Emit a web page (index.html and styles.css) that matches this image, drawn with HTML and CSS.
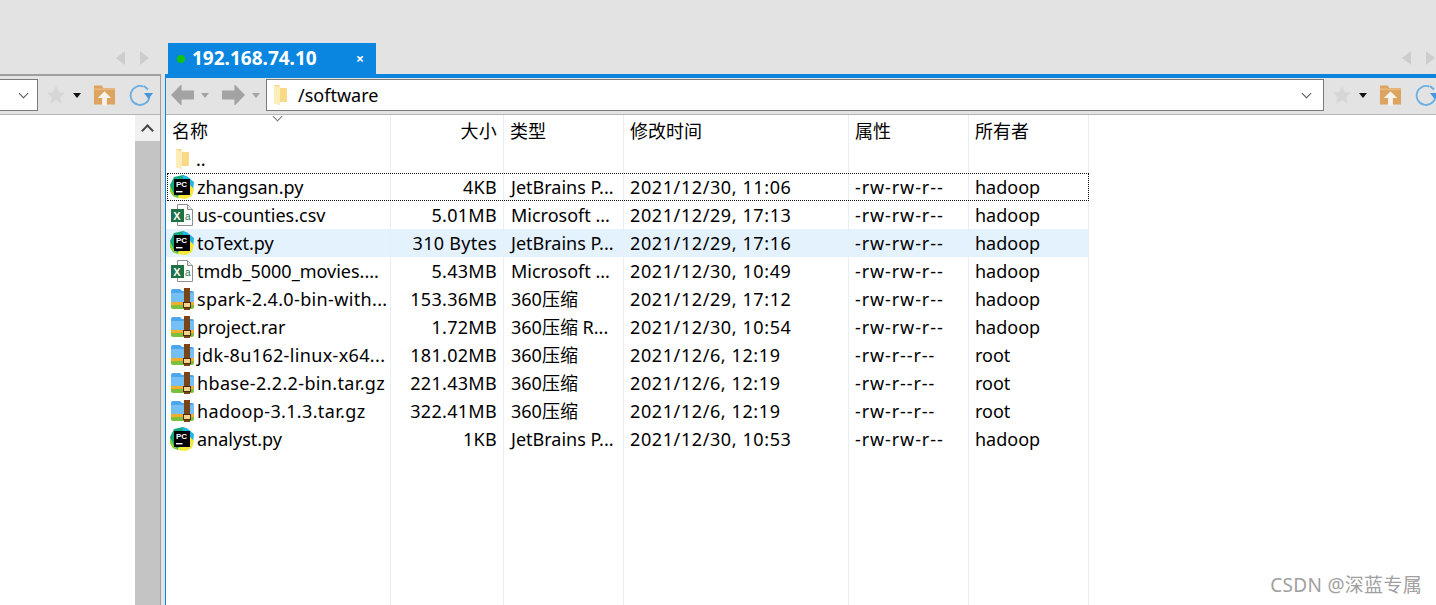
FILE: index.html
```html
<!DOCTYPE html>
<html lang="en">
<head>
    <meta charset="UTF-8">
    <meta name="viewport" content="width=device-width, initial-scale=1.0">
    <title>192.168.74.10</title>
    <link rel="stylesheet" href="styles.css">
</head>
<body>
    <svg class="icon-defs" width="0" height="0">
        <defs>
            <symbol id="i-folder" viewBox="0 0 16 22">
                <path d="M2 1h5l1 3h6q1 0 1 1v12q0 1-1 1H8v3l-6-2z" fill="#f5d47a"/>
                <path d="M8 4h6q1 0 1 1v12q0 1-1 1H8z" fill="#f7d986"/>
                <path d="M2 1l6 2.500V21l-6-2z" fill="#fdedb8"/>
            </symbol>
            <symbol id="i-pc" viewBox="0 0 24 24">
                <path d="M0 10l4-8 9-2 5 2-2 10-8 11-5-2-3-5z" fill="#14a97c"/>
                <path d="M12 0l6 2 6 5-1 9-8-5z" fill="#23b5e8"/>
                <path d="M20 10l4 4-2 7-6 3-9-1 7-11z" fill="#f4e83a"/>
                <path d="M0 10l4 9 5 4-6-2-3-5z" fill="#8fd52c"/>
                <rect x="4" y="4" width="16" height="16" fill="#000"/>
                <text x="6" y="12" class="pc-label">PC</text>
                <rect x="6" y="16" width="6.500" height="1.400" fill="#fff"/>
            </symbol>
            <symbol id="i-xls" viewBox="0 0 24 24">
                <path d="M7.500 1.500h10l5 5v16h-15z" fill="#fff" stroke="#8f8f8f"/>
                <path d="M17.500 1.500v5h5" fill="#e8e8e8" stroke="#8f8f8f"/>
                <rect x="1" y="6" width="13" height="13" fill="#1e7145"/>
                <text x="3.200" y="16.500" class="xls-label">X</text>
                <text x="15" y="17" class="xls-small">a</text>
            </symbol>
            <symbol id="i-rar" viewBox="0 0 24 24">
                <path d="M1 4q0-2 2-2h7l2 2h10q2 0 2 2v9H1z" fill="#4aa6ee"/>
                <path d="M1 6h23v9H1z" fill="#74c0f6"/>
                <path d="M1 15h23v3H1z" fill="#f4ad2d"/>
                <path d="M1 18h23v2q0 2-2 2H3q-2 0-2-2z" fill="#7cbf3a"/>
                <rect x="14" y="1" width="6" height="22" fill="#7a4419"/>
                <rect x="13.500" y="15.500" width="7" height="5" fill="#f3d58f" stroke="#4d2a0e"/>
            </symbol>
            <symbol id="i-star" viewBox="0 0 20 20">
                <path d="M10 1l2.800 6 6.200.7-4.600 4.300 1.300 6.500-5.700-3.200-5.700 3.200 1.300-6.500L1 7.700 7.200 7z" fill="#d6d6d6" stroke="#dedede"/>
            </symbol>
            <symbol id="i-home" viewBox="0 0 24 22">
                <path d="M1 1h8l2 3h12v17H1z" fill="#dca361"/>
                <path d="M1 4h22v2H1z" fill="#e6b67c"/>
                <path d="M12 7l7 7h-4.500v8h-5v-8H5z" fill="#f6f2ec"/>
            </symbol>
            <symbol id="i-refresh" viewBox="0 0 24 24">
                <path d="M14.500 3.600A9.500 9.500 0 1 0 20.500 14" fill="none" stroke="#6aaee6" stroke-width="1.800"/>
                <path d="M15 3l4 3.500" fill="none" stroke="#6aaee6" stroke-width="1.800"/>
                <path d="M15 10h9l-4.500 6z" fill="#4797de"/>
            </symbol>
        </defs>
    </svg>

    <div class="window">
        <header class="tabbar">
            <div class="tab-side">
                <span class="tri tri-left"></span>
                <span class="tri tri-right"></span>
            </div>
            <div class="tab">
                <span class="tab-dot"></span>
                <span class="tab-title">192.168.74.10</span>
                <span class="tab-close">×</span>
            </div>
            <div class="tab-side tab-side-wide">
                <span class="tri tri-left"></span>
                <span class="tri tri-right"></span>
            </div>
        </header>

        <main class="panes">
            <section class="pane-left">
                <div class="toolbar toolbar-left">
                    <div class="address address-left"><span class="chevron"></span></div>
                    <div class="tool-group">
                        <svg class="ico-star"><use href="#i-star"/></svg>
                        <span class="caret caret-dark"></span>
                        <svg class="ico-home"><use href="#i-home"/></svg>
                        <svg class="ico-refresh"><use href="#i-refresh"/></svg>
                    </div>
                </div>
                <div class="left-body">
                    <div class="left-list"></div>
                    <div class="scrollbar">
                        <div class="scroll-up"><span class="scroll-arrow"></span></div>
                    </div>
                </div>
            </section>

            <section class="pane-right">
                <div class="toolbar toolbar-right">
                    <div class="nav-group">
                        <span class="nav-arrow nav-back"></span>
                        <span class="caret"></span>
                        <span class="nav-arrow nav-forward"></span>
                        <span class="caret"></span>
                    </div>
                    <div class="address address-right">
                        <svg class="ico-path-folder"><use href="#i-folder"/></svg>
                        <span class="path">/software</span>
                        <span class="chevron"></span>
                    </div>
                    <div class="tool-group">
                        <svg class="ico-star"><use href="#i-star"/></svg>
                        <span class="caret caret-dark"></span>
                        <svg class="ico-home"><use href="#i-home"/></svg>
                        <svg class="ico-refresh"><use href="#i-refresh"/></svg>
                    </div>
                </div>

                <div class="file-list">
                    <span class="sort-mark"></span>
                    <div class="row row-head">
                        <div class="cell">名称</div>
                        <div class="cell cell-num">大小</div>
                        <div class="cell">类型</div>
                        <div class="cell">修改时间</div>
                        <div class="cell">属性</div>
                        <div class="cell">所有者</div>
                    </div>
                    <div class="row">
                        <div class="cell cell-name"><svg class="file-ico file-ico-folder"><use href="#i-folder"/></svg><span class="file-name">..</span></div>
                        <div class="cell"></div><div class="cell"></div><div class="cell"></div><div class="cell"></div><div class="cell"></div>
                    </div>
                    <div class="row row-focus">
                        <div class="cell cell-name"><svg class="file-ico"><use href="#i-pc"/></svg><span class="file-name">zhangsan.py</span></div>
                        <div class="cell cell-num">4KB</div>
                        <div class="cell cell-type">JetBrains P...</div>
                        <div class="cell cell-date">2021/12/30, 11:06</div>
                        <div class="cell cell-perm">-rw-rw-r--</div>
                        <div class="cell">hadoop</div>
                    </div>
                    <div class="row">
                        <div class="cell cell-name"><svg class="file-ico"><use href="#i-xls"/></svg><span class="file-name">us-counties.csv</span></div>
                        <div class="cell cell-num">5.01MB</div>
                        <div class="cell cell-type">Microsoft ...</div>
                        <div class="cell cell-date">2021/12/29, 17:13</div>
                        <div class="cell cell-perm">-rw-rw-r--</div>
                        <div class="cell">hadoop</div>
                    </div>
                    <div class="row row-hover">
                        <div class="cell cell-name"><svg class="file-ico"><use href="#i-pc"/></svg><span class="file-name">toText.py</span></div>
                        <div class="cell cell-num">310 Bytes</div>
                        <div class="cell cell-type">JetBrains P...</div>
                        <div class="cell cell-date">2021/12/29, 17:16</div>
                        <div class="cell cell-perm">-rw-rw-r--</div>
                        <div class="cell">hadoop</div>
                    </div>
                    <div class="row">
                        <div class="cell cell-name"><svg class="file-ico"><use href="#i-xls"/></svg><span class="file-name">tmdb_5000_movies....</span></div>
                        <div class="cell cell-num">5.43MB</div>
                        <div class="cell cell-type">Microsoft ...</div>
                        <div class="cell cell-date">2021/12/30, 10:49</div>
                        <div class="cell cell-perm">-rw-rw-r--</div>
                        <div class="cell">hadoop</div>
                    </div>
                    <div class="row">
                        <div class="cell cell-name"><svg class="file-ico"><use href="#i-rar"/></svg><span class="file-name file-name-wide">spark-2.4.0-bin-with...</span></div>
                        <div class="cell cell-num">153.36MB</div>
                        <div class="cell cell-type">360压缩</div>
                        <div class="cell cell-date">2021/12/29, 17:12</div>
                        <div class="cell cell-perm">-rw-rw-r--</div>
                        <div class="cell">hadoop</div>
                    </div>
                    <div class="row">
                        <div class="cell cell-name"><svg class="file-ico"><use href="#i-rar"/></svg><span class="file-name">project.rar</span></div>
                        <div class="cell cell-num">1.72MB</div>
                        <div class="cell cell-type">360压缩 R...</div>
                        <div class="cell cell-date">2021/12/30, 10:54</div>
                        <div class="cell cell-perm">-rw-rw-r--</div>
                        <div class="cell">hadoop</div>
                    </div>
                    <div class="row">
                        <div class="cell cell-name"><svg class="file-ico"><use href="#i-rar"/></svg><span class="file-name file-name-wide">jdk-8u162-linux-x64...</span></div>
                        <div class="cell cell-num">181.02MB</div>
                        <div class="cell cell-type">360压缩</div>
                        <div class="cell cell-date">2021/12/6, 12:19</div>
                        <div class="cell cell-perm">-rw-r--r--</div>
                        <div class="cell">root</div>
                    </div>
                    <div class="row">
                        <div class="cell cell-name"><svg class="file-ico"><use href="#i-rar"/></svg><span class="file-name file-name-wide">hbase-2.2.2-bin.tar.gz</span></div>
                        <div class="cell cell-num">221.43MB</div>
                        <div class="cell cell-type">360压缩</div>
                        <div class="cell cell-date">2021/12/6, 12:19</div>
                        <div class="cell cell-perm">-rw-r--r--</div>
                        <div class="cell">root</div>
                    </div>
                    <div class="row">
                        <div class="cell cell-name"><svg class="file-ico"><use href="#i-rar"/></svg><span class="file-name file-name-wide">hadoop-3.1.3.tar.gz</span></div>
                        <div class="cell cell-num">322.41MB</div>
                        <div class="cell cell-type">360压缩</div>
                        <div class="cell cell-date">2021/12/6, 12:19</div>
                        <div class="cell cell-perm">-rw-r--r--</div>
                        <div class="cell">root</div>
                    </div>
                    <div class="row">
                        <div class="cell cell-name"><svg class="file-ico"><use href="#i-pc"/></svg><span class="file-name">analyst.py</span></div>
                        <div class="cell cell-num">1KB</div>
                        <div class="cell cell-type">JetBrains P...</div>
                        <div class="cell cell-date">2021/12/30, 10:53</div>
                        <div class="cell cell-perm">-rw-rw-r--</div>
                        <div class="cell">hadoop</div>
                    </div>
                    <div class="row row-fill">
                        <div class="cell"></div><div class="cell"></div><div class="cell"></div><div class="cell"></div><div class="cell"></div><div class="cell"></div>
                    </div>
                </div>
            </section>
        </main>
    </div>

    <div class="watermark">CSDN @深蓝专属</div>
</body>
</html>
```

FILE: styles.css
```css
* { box-sizing: border-box; }
html, body { height: 100%; }
body { margin: 0; overflow: hidden; background-color: #fff; color: #000; font-family: "Noto Sans", "Noto Sans CJK SC", sans-serif; font-size: 18px; }
.icon-defs { display: block; height: 0; }
.window { display: flex; flex-direction: column; width: 1460px; height: 605px; }

/* tab strip */
.tabbar { display: flex; flex: none; height: 74px; padding-top: 43px; background-color: #e3e3e3; }
.tab-side { display: flex; width: 168px; flex: none; justify-content: flex-end; align-items: flex-start; gap: 15px; padding: 8px 19px 0 0; }
.tab-side-wide { width: 1068px; padding-right: 9px; }
.tri { width: 0; height: 0; border-top: 7px solid transparent; border-bottom: 7px solid transparent; }
.tri-left { border-right: 9px solid #cdcdcd; }
.tri-right { border-left: 9px solid #cdcdcd; }
.tab { display: flex; align-items: center; width: 208px; background-color: #0a86e0; color: #fff; padding: 0 12px 0 9px; }
.tab-dot { width: 8px; height: 8px; border-radius: 50%; background-color: #0fc30f; margin-right: 7px; }
.tab-title { flex: 1; font-size: 19px; font-weight: 700; line-height: 31px; }
.tab-close { font-size: 14px; font-weight: 700; line-height: 14px; }

/* panes */
.panes { display: flex; flex: 1; min-height: 0; background-color: #e3e3e3; }
.pane-left { display: flex; flex-direction: column; flex: none; width: 161px; background-color: #fff; border-top: 2px solid #9e9e9e; border-right: 1px solid #9e9e9e; }
.pane-right { display: flex; flex-direction: column; flex: none; width: 1295px; margin-left: 4px; border-top: 4px solid #0a86e0; border-left: 1px solid #0a86e0; background-color: #fff; }

.toolbar { display: flex; flex: none; align-items: flex-start; height: 37px; background-color: #e3e3e3; border-bottom: 1px solid #b5b5b5; }
.toolbar-left { height: 39px; padding-top: 2px; }
.address { display: flex; align-items: center; height: 32px; margin-top: 1px; background-color: #fff; border: 1px solid #7a7a7a; }
.address-left { width: 38px; justify-content: flex-end; padding-right: 10px; border-left: none; }
.address-right { width: 1058px; padding: 0 13px 0 5px; }
.chevron { width: 7px; height: 7px; margin-top: -4px; border-right: 1px solid #555; border-bottom: 1px solid #555; transform: rotate(45deg); }
.ico-path-folder { width: 16px; height: 22px; flex: none; }
.path { flex: 1; margin-left: 10px; line-height: 30px; }

.nav-group { display: flex; align-items: center; width: 100px; height: 32px; padding-left: 5px; margin-top: 1px; }
.nav-arrow { display: block; width: 23px; height: 20px; background-color: #a3a3a3; }
.nav-back { clip-path: polygon(0 50%, 42% 0, 46% 0, 46% 28%, 100% 28%, 100% 72%, 46% 72%, 46% 100%, 42% 100%); }
.nav-forward { clip-path: polygon(100% 50%, 58% 0, 54% 0, 54% 28%, 0 28%, 0 72%, 54% 72%, 54% 100%, 58% 100%); margin-left: 13px; }
.caret { width: 0; height: 0; margin-left: 7px; border-left: 4.500px solid transparent; border-right: 4.500px solid transparent; border-top: 5px solid #a3a3a3; }
.caret-dark { border-top-color: #111; margin: 0 0 0 7px; }

.tool-group { display: flex; align-items: center; height: 32px; margin-top: 1px; padding-left: 8px; }
.ico-star { width: 20px; height: 20px; flex: none; }
.ico-home { width: 23px; height: 22px; flex: none; margin-left: 12px; }
.ico-refresh { width: 24px; height: 24px; flex: none; margin-left: 13px; }

/* left pane list */
.left-body { display: flex; flex: 1; min-height: 0; }
.left-list { flex: 1; background-color: #fff; }
.scrollbar { width: 25px; flex: none; background-color: #c4c4c4; }
.scroll-up { display: flex; justify-content: center; height: 26px; background-color: #f0f0f0; padding-top: 11px; }
.scroll-arrow { width: 9px; height: 9px; border-left: 2px solid #444; border-top: 2px solid #444; transform: rotate(45deg); }

/* file list */
.file-list { position: relative; display: flex; flex-direction: column; flex: 1; min-height: 0; background-color: #fff; }
.sort-mark { position: absolute; left: 108px; top: -2px; width: 7px; height: 7px; border-right: 1px solid #777; border-bottom: 1px solid #777; transform: rotate(45deg); }
.row { display: grid; grid-template-columns: 225px 113px 120px 225px 120px 120px; width: 923px; height: 28px; flex: none; line-height: 28px; white-space: nowrap; }
.row-head { height: 30px; line-height: 32px; }
.row-fill { flex: 1; }
.row-hover { background-color: #e4f2fd; }
.row-focus { outline: 1px dotted #111; outline-offset: -1px; margin-left: 1px; width: 922px; grid-template-columns: 224px 113px 120px 225px 120px 120px; }
.row-focus .cell-name { padding-left: 3px; }
.cell { padding-left: 6px; border-right: 1px solid #e6eef6; overflow: hidden; }
.cell-num { padding: 0 6px 0 0; text-align: right; letter-spacing: 0.3px; }
.cell-name { display: flex; align-items: center; padding-left: 4px; }
.cell-type { padding-left: 7px; }
.cell-date { letter-spacing: 0.6px; }
.cell-perm { letter-spacing: 0.9px; }
.file-ico { width: 24px; height: 24px; flex: none; }
.file-ico-folder { width: 16px; height: 22px; margin: 0 3px 0 4px; }
.file-name { margin-left: 3px; }
.file-name-wide { letter-spacing: 0.35px; }
.pc-label { font-family: "Liberation Sans", sans-serif; font-size: 8px; font-weight: 700; fill: #fff; }
.xls-label { font-family: "Liberation Sans", sans-serif; font-size: 11px; font-weight: 700; fill: #fff; }
.xls-small { font-family: "Liberation Sans", sans-serif; font-size: 10px; fill: #1e7145; }

.watermark { position: absolute; right: 14px; bottom: 8px; color: #a0a0a0; font-size: 19px; line-height: 24px; letter-spacing: 0.3px; }
```
